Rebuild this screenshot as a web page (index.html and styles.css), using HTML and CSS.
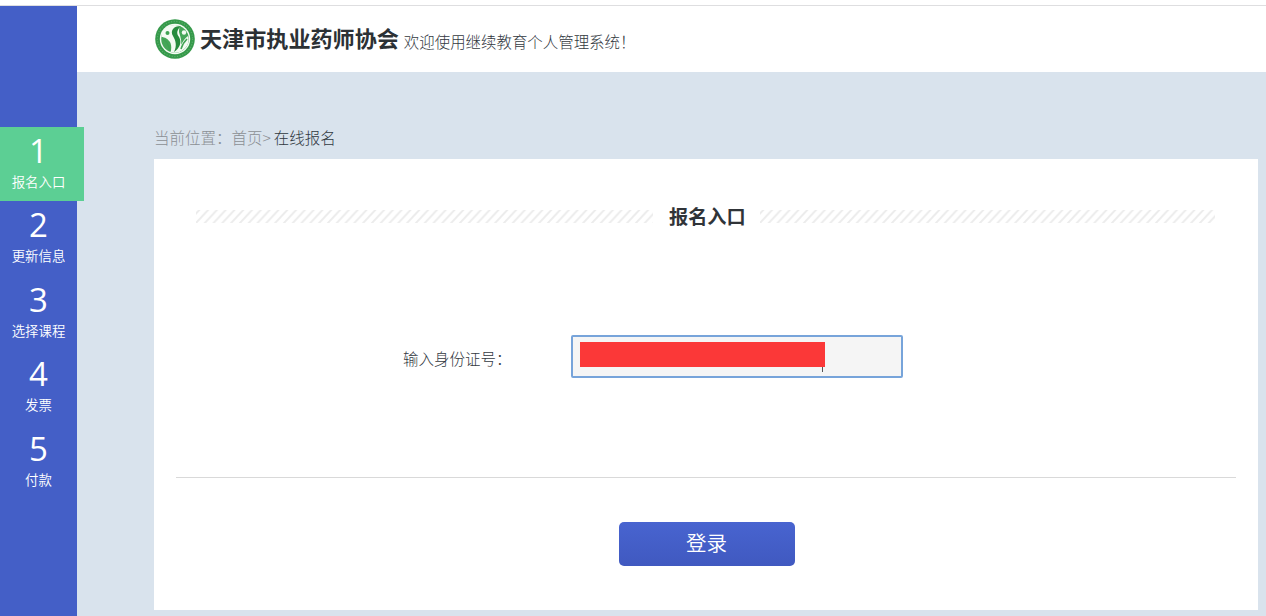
FILE: index.html
```html
<!DOCTYPE html>
<html lang="zh-CN">
<head>
<meta charset="utf-8">
<title>在线报名</title>
<link rel="stylesheet" href="styles.css">
</head>
<body>
<div class="app">
  <nav class="sidebar">
    <a class="step step-active"><span class="num">1</span><span class="name">报名入口</span></a>
    <a class="step"><span class="num">2</span><span class="name">更新信息</span></a>
    <a class="step"><span class="num">3</span><span class="name">选择课程</span></a>
    <a class="step"><span class="num">4</span><span class="name">发票</span></a>
    <a class="step"><span class="num">5</span><span class="name">付款</span></a>
  </nav>
  <div class="main">
    <header class="header">
      <svg class="logo" viewBox="0 0 40 40">
        <circle cx="20" cy="20" r="19.8" fill="#35994a"/>
        <circle cx="20" cy="20" r="17.6" fill="none" stroke="#58ad69" stroke-width="1.2" stroke-dasharray="1.2 1.5"/>
        <circle cx="20" cy="20" r="15.2" fill="#f4fbf3"/>
        <circle cx="20" cy="20" r="13.8" fill="#46a658"/>
        <path d="M20 6C11 6 6 12 6.500 18c3 0 7 2 9 6 1 3 1 6 0 9 3 1 6 1 9 0C32 30 35 23 33 17c-3 2-5 5-7 9 1-5-1-9-2-13 0-3 0-5 2-6z" fill="#f4fbf3"/>
        <path d="M26 7c-8 0-11 5-8 10 3 5 4 10 1 16 6-4 8-10 5-15-3-4-2-7 2-11z" fill="#268b3d"/>
        <path d="M8 20c3 2 6 6 7 12M32 20c-3 3-5 6-6 10" fill="none" stroke="#3fa352" stroke-width="1.500"/>
        <circle cx="12.500" cy="14" r="2" fill="#3fa352"/>
        <circle cx="29" cy="13.500" r="2.200" fill="#f4fbf3"/>
      </svg>
      <h1 class="org">天津市执业药师协会</h1>
      <span class="welcome">欢迎使用继续教育个人管理系统！</span>
    </header>
    <div class="content">
      <div class="crumbs">当前位置：<span class="home">首页&gt;</span><span class="here">在线报名</span></div>
      <section class="panel">
        <div class="heading">
          <svg class="stripes stripes-left">
            <defs><pattern id="hatch" width="8.8" height="13" patternUnits="userSpaceOnUse">
              <path d="M-9.800 14L4.200-1M-1 14L13-1M7.800 14L21.800-1" stroke="#ececec" stroke-width="1.900"/>
            </pattern></defs>
            <rect width="100%" height="13" fill="url(#hatch)"/>
          </svg>
          <h2 class="title">报名入口</h2>
          <svg class="stripes stripes-right"><rect width="100%" height="13" fill="url(#hatch)"/></svg>
        </div>
        <div class="field">
          <label class="label">输入身份证号：</label>
          <div class="input"><span class="mask"></span><span class="caret"></span></div>
        </div>
        <div class="actions"><button class="login">登录</button></div>
      </section>
    </div>
  </div>
</div>
</body>
</html>
```
FILE: styles.css
```css
* { box-sizing: border-box; }
body {
  margin: 0;
  background: #fff;
  color: #33393f;
  font-family: "Open Sans", "Noto Sans CJK SC", sans-serif;
  font-size: 15.5px;
}
.app {
  display: flex;
  height: 616px;
  overflow: hidden;
  padding-top: 5px;
}
.sidebar {
  width: 77px;
  flex: none;
  padding-top: 121px;
  margin-top: 1px;
  background: #445fc7;
  color: #fff;
}
.step {
  display: flex;
  flex-direction: column;
  align-items: center;
  width: 77px;
  height: 74.4px;
  padding-top: 5px;
}
.step-active {
  width: 84px;
  padding-right: 7px;
  background: #5ccf94;
  position: relative;
}
.num { font-size: 33px; line-height: 38px; }
.name { font-size: 13.4px; line-height: 24px; font-weight: 350; }
.main {
  flex: 1;
  min-width: 0;
  display: flex;
  flex-direction: column;
  background: #d9e3ed;
}
.app::before {
  content: "";
  position: absolute;
  top: 5px;
  left: 0;
  right: 0;
  height: 1px;
  background: #dedee0;
}
.header {
  display: flex;
  height: 67px;
  padding-left: 78px;
  background: #fff;
}
.logo { width: 40px; height: 40px; margin-top: 14px; }
.org {
  margin: 14px 0 0 5px;
  font-size: 22.1px;
  line-height: 38px;
  font-weight: 700;
  color: #2c3135;
  white-space: nowrap;
}
.welcome {
  margin: 21px 0 0 5px;
  line-height: 30px;
  font-size: 15.45px;
  font-weight: 300;
  font-family: "Noto Sans CJK SC", sans-serif;
  white-space: nowrap;
}
.content { padding: 50px 8px 0 77px; }
.crumbs {
  height: 37px;
  line-height: 30px;
  color: #8b8f94;
  font-family: "Noto Sans CJK SC", sans-serif;
  font-weight: 300;
}
.here { color: #30383f; margin-left: 3px; }
.panel {
  height: 451px;
  padding: 0 22px;
  background: #fff;
}
.heading {
  display: flex;
  align-items: flex-start;
  height: 176px;
  padding: 51px 21px 0 20px;
}
.stripes { height: 13px; }
.stripes-left { width: 457px; }
.title {
  margin: -8px 14px 0 16px;
  font-size: 19.2px;
  line-height: 30px;
  color: #303438;
  white-space: nowrap;
}
.stripes-right { flex: 1; min-width: 0; }
.field {
  display: flex;
  height: 143px;
  padding-left: 227px;
  border-bottom: 1px solid #d9d9d9;
}
.label {
  width: 168px;
  padding-top: 8px;
  line-height: 30px;
  font-weight: 300;
  font-family: "Noto Sans CJK SC", sans-serif;
}
.input {
  display: flex;
  width: 332px;
  height: 43px;
  padding: 5px 0 0 7px;
  border: 2px solid #77a4da;
  border-radius: 2px;
  background: #f5f5f5;
}
.mask { width: 245px; height: 25px; background: #fb3838; }
.caret { width: 1px; height: 5px; margin: 25px 0 0 -3px; background: #555; }
.actions { display: flex; justify-content: center; padding: 44px 0 0 1px; }
.login {
  width: 176px;
  height: 44px;
  padding: 0 0 4px;
  border: 0;
  border-radius: 5px;
  background: linear-gradient(#4864d0, #4059c0);
  color: #fff;
  font: 350 20.5px/40px "Noto Sans CJK SC", sans-serif;
}
```
